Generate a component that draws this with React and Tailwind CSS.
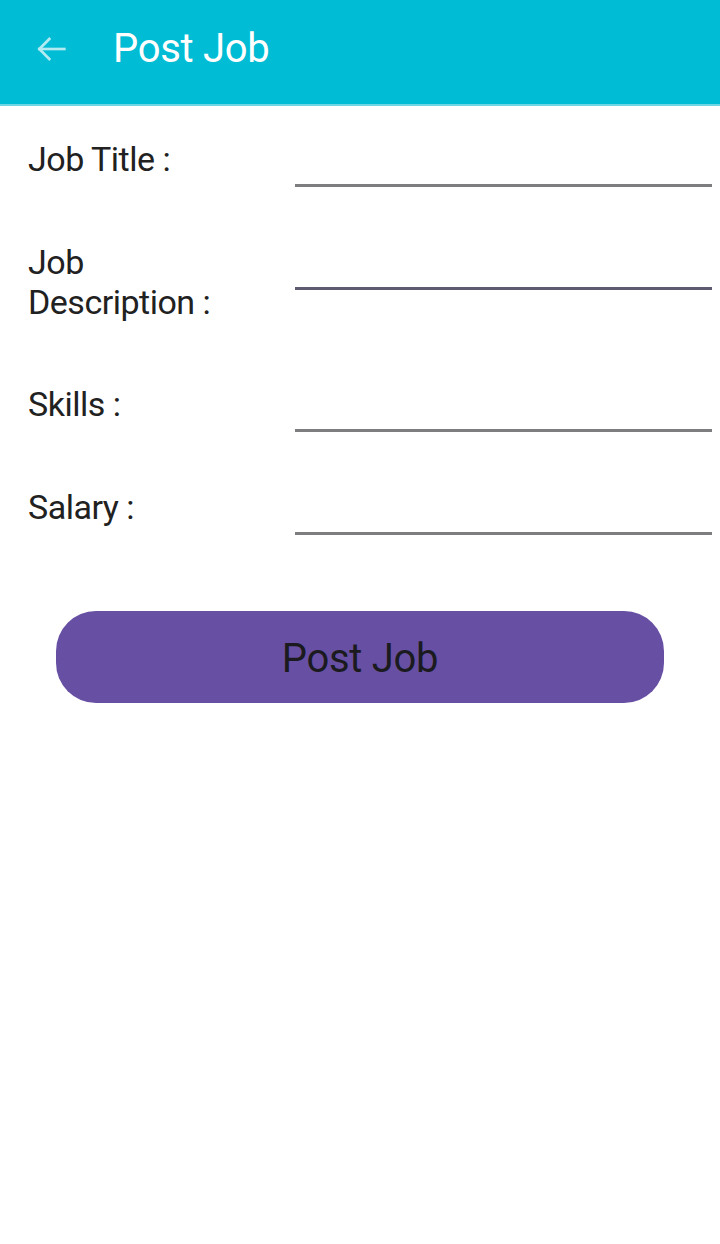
import React from 'react';

const fields = [
  { label: 'Job Title :', pad: 'pb-[55px]', line: 'border-[#7d7d7f]' },
  { label: ['Job', 'Description :'], pad: 'pb-[62px]', line: 'border-[#5e5a70]' },
  { label: 'Skills :', pad: 'pb-[55px]', line: 'border-[#7d7d7f]' },
  { label: 'Salary :', pad: '', line: 'border-[#7d7d7f]' },
];

const BackArrow = () => (
  <svg width="40" height="40" viewBox="0 0 24 24" fill="none" stroke="#b2ebf2" strokeWidth="1.6" strokeLinecap="square">
    <path d="M20 12H5" />
    <path d="M11 6l-6 6 6 6" />
  </svg>
);

const FieldRow = ({ field }) => (
  <div className={`flex flex-row items-start ${field.pad}`}>
    <div className="w-[295px] pl-[28px] text-[34px] leading-[40px] text-[#212121] tracking-[-0.5px]">
      {Array.isArray(field.label)
        ? field.label.map((l) => <div key={l}>{l}</div>)
        : field.label}
    </div>
    <div className={`flex-1 mr-[8px] h-[48px] border-b-[3px] ${field.line}`} />
  </div>
);

export default function App() {
  return (
    <div className="w-[720px] h-[1244px] bg-white" style={{ fontFamily: 'Roboto, "Noto Sans", sans-serif' }}>
      <header className="h-[106px] pb-[6px] bg-[#00bcd4] border-b-2 border-[#6fd6e4] flex flex-row items-center">
        <div className="ml-[31px] w-[82px] flex items-center">
          <BackArrow />
        </div>
        <h1 className="text-[40px] text-white leading-none tracking-[-0.3px]">Post Job</h1>
      </header>

      <div className="pt-[33px]">
        {fields.map((f, i) => (
          <FieldRow key={i} field={f} />
        ))}
      </div>

      <div className="px-[56px] mt-[76px]">
        <button className="w-full h-[92px] pt-[4px] rounded-[40px] bg-[#6750a4] text-[40px] text-[#1b1b1f] tracking-[-0.3px]">
          Post Job
        </button>
      </div>
    </div>
  );
}
